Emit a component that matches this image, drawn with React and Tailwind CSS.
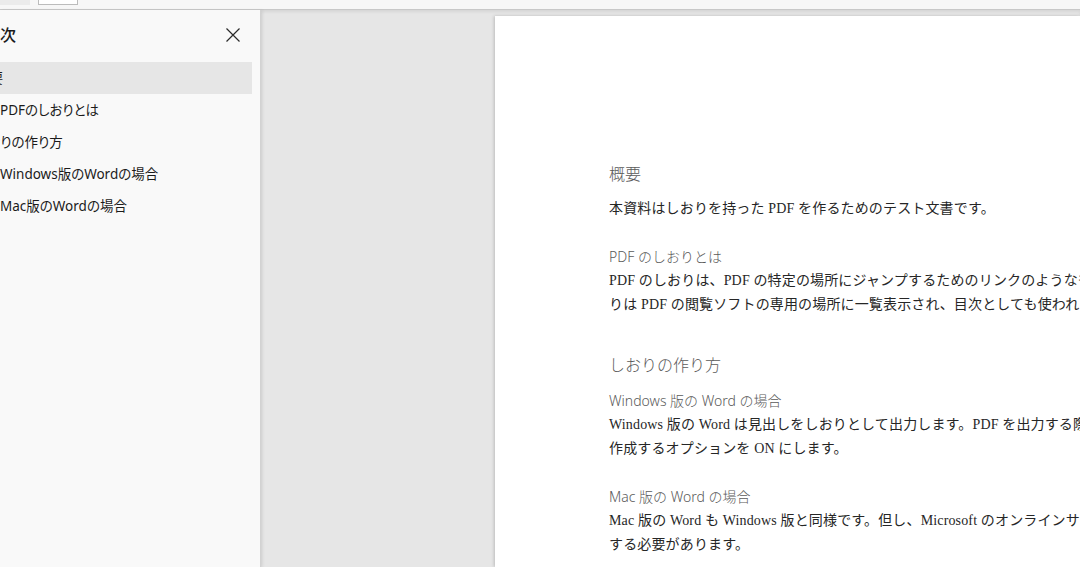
import React from "react";

const toc = [
  { label: "概要", level: 1, active: true },
  { label: "PDFのしおりとは", level: 2 },
  { label: "しおりの作り方", level: 1 },
  { label: "Windows版のWordの場合", level: 2 },
  { label: "Mac版のWordの場合", level: 2 },
];

const uiFont = "[font-family:'Noto_Sans','Noto_Sans_CJK_JP',sans-serif] [font-feature-settings:'palt']";
const bodyFont = "[font-family:'Liberation_Serif','Noto_Sans_CJK_JP',serif]";
const headFont = "[font-family:'Noto_Sans','Noto_Sans_CJK_JP',sans-serif]";

function Heading({ children, big, className = "" }) {
  return (
    <div
      className={`${headFont} whitespace-nowrap font-light leading-[24px] text-[#5a5a5a] ${
        big ? "text-[16px]" : "text-[14px]"
      } ${className}`}
    >
      {children}
    </div>
  );
}

function Body({ lines, className = "" }) {
  return (
    <div className={`${bodyFont} text-[14px] leading-[24px] tracking-[0.15px] text-[#262626] ${className}`}>
      {lines.map((line) => (
        <div className="whitespace-nowrap" key={line}>
          {line}
        </div>
      ))}
    </div>
  );
}

export default function App() {
  return (
    <div className="flex h-[567px] w-[1080px] flex-col overflow-hidden bg-[#e6e6e6]">
      <div className="flex h-[10px] shrink-0 items-start border-b border-[#c8c8c8] bg-[#f7f7f7]">
        <div className="h-[5px] w-[30px] bg-[#ebebeb]" />
        <div className="ml-[8px] h-[5px] w-[40px] border border-t-0 border-[#bcbcbc] bg-white" />
      </div>

      <div className="flex min-h-0 flex-1">
        <aside
          className={`${uiFont} z-10 w-[261px] shrink-0 overflow-hidden border-r border-[#d2d2d2] bg-[#f9f9f9] shadow-[2px_0_3px_rgba(0,0,0,0.06)]`}
        >
          <div className="flex h-[50px] items-center justify-between pr-[20px]">
            <span className="ml-[-16px] whitespace-nowrap text-[16px] font-medium text-[#1b1b1b]">
              目次
            </span>
            <svg
              aria-label="閉じる"
              className="h-[14px] w-[14px]"
              fill="none"
              stroke="#2a2a2a"
              strokeWidth="1.2"
              viewBox="0 0 14 14"
            >
              <path d="M0.5 0.5 L13.5 13.5 M13.5 0.5 L0.5 13.5" />
            </svg>
          </div>
          <ul className="mt-[2px] pr-[8px]">
            {toc.map((item) => (
              <li
                className={`flex h-[32px] items-center whitespace-nowrap text-[13.5px] text-[#1b1b1b] ${
                  item.active ? "bg-[#e6e6e6]" : ""
                }`}
                key={item.label}
              >
                <span className={item.level === 1 ? "ml-[-24px]" : "ml-0"}>{item.label}</span>
              </li>
            ))}
          </ul>
        </aside>

        <main className="flex min-w-0 flex-1 overflow-hidden pl-[234px] pt-[6px] shadow-[inset_0_2px_3px_rgba(0,0,0,0.07)]">
          <div className="flex-1 overflow-hidden bg-white pl-[114px] pt-[146px] shadow-[-1px_0_3px_rgba(0,0,0,0.18)]">
            <Heading big>概要</Heading>
            <Body className="mt-[11px]" lines={["本資料はしおりを持った PDF を作るためのテスト文書です。"]} />

            <Heading className="mt-[24px]">PDF のしおりとは</Heading>
            <Body
              lines={[
                "PDF のしおりは、PDF の特定の場所にジャンプするためのリンクのようなものです。しお",
                "りは PDF の閲覧ソフトの専用の場所に一覧表示され、目次としても使われます。",
              ]}
            />

            <Heading big className="mt-[36px]">
              しおりの作り方
            </Heading>
            <Heading className="mt-[12px]">Windows 版の Word の場合</Heading>
            <Body
              lines={[
                "Windows 版の Word は見出しをしおりとして出力します。PDF を出力する際に、しおりを",
                "作成するオプションを ON にします。",
              ]}
            />

            <Heading className="mt-[24px]">Mac 版の Word の場合</Heading>
            <Body
              lines={[
                "Mac 版の Word も Windows 版と同様です。但し、Microsoft のオンラインサービスを利用",
                "する必要があります。",
              ]}
            />
          </div>
        </main>
      </div>
    </div>
  );
}
